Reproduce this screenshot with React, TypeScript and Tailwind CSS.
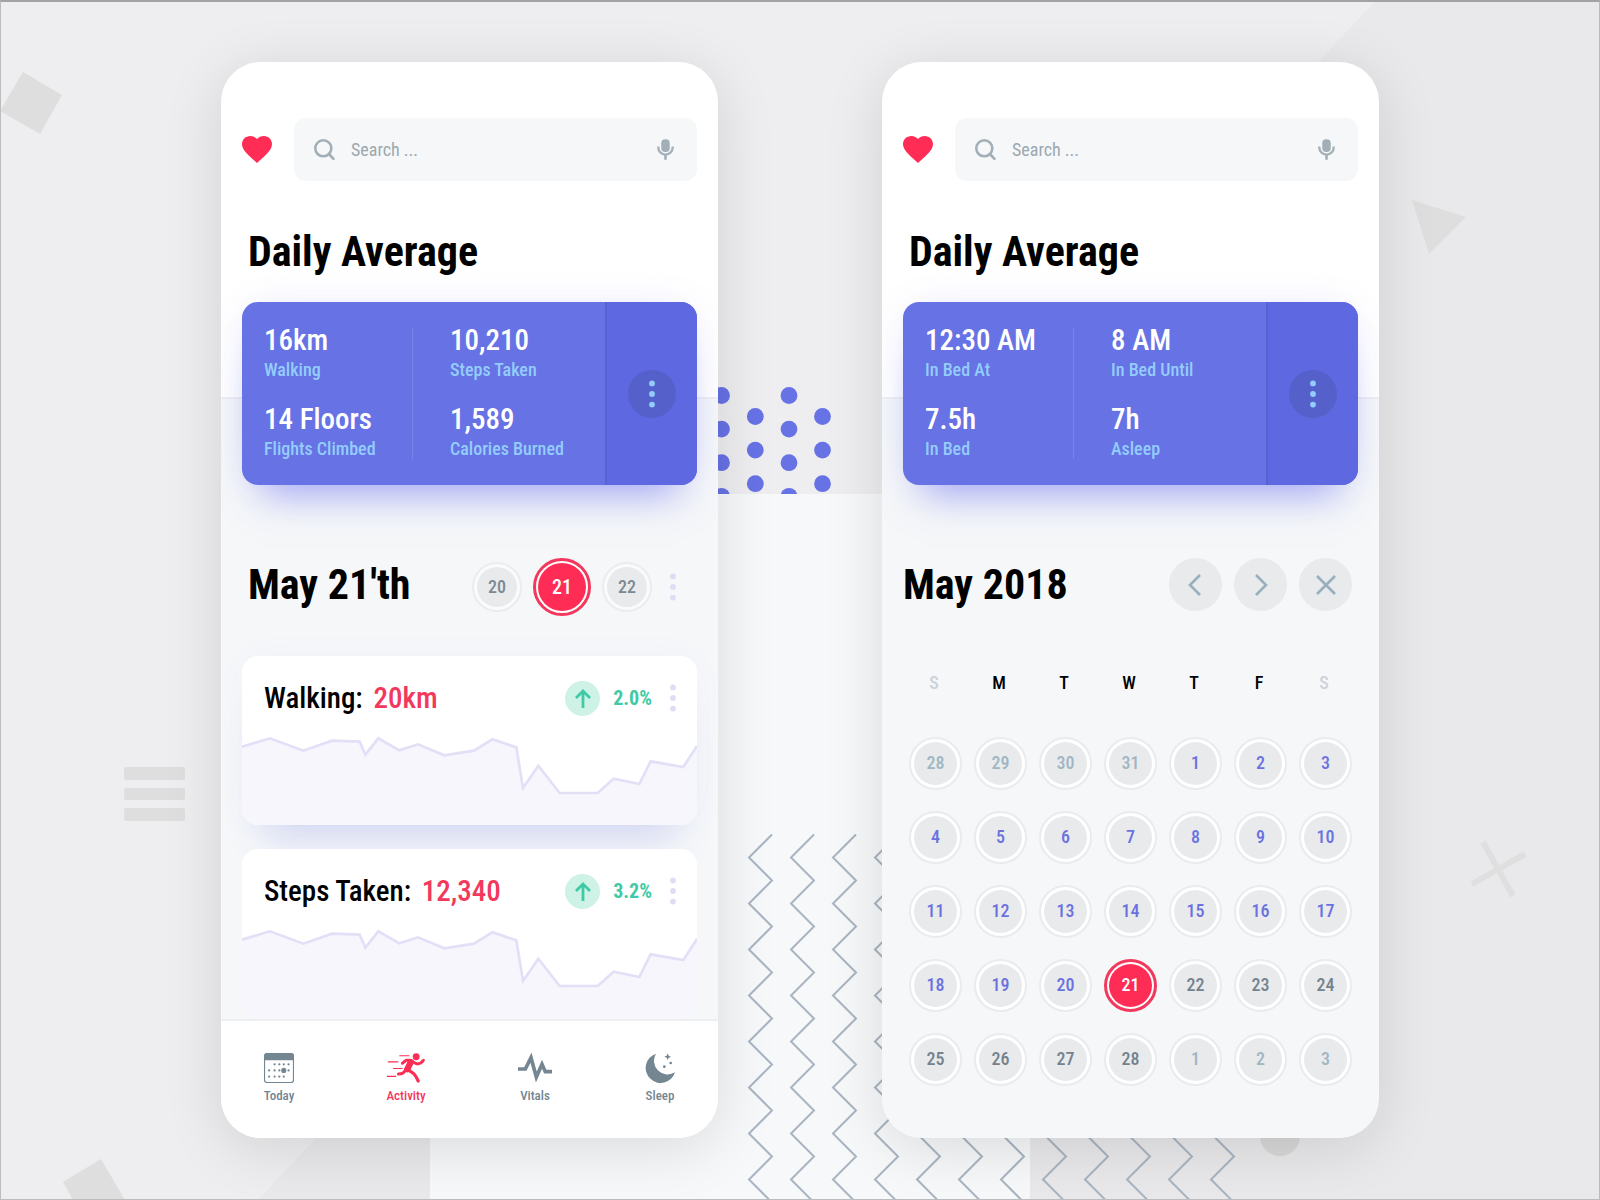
import type { ReactNode } from "react";

const chartPoints =
  "0,32 84,7 184,44 270,14 353,17 370,56 409,7 472,43 528,25 607,58 696,44 751,10 823,34 843,156 889,89 953,171 1067,171 1115,128 1192,144 1226,76 1324,93 1365,30";

const zigzagColumns = [772, 814, 856, 898, 940, 982, 1024, 1066, 1108, 1150, 1192, 1234];
const zigzagSegments = "l-23,23 l23,23 ".repeat(8);

const dotColumns = [
  { x: 721.5, y: 395.5 },
  { x: 755.3, y: 416.5 },
  { x: 789, y: 395.5 },
  { x: 822.5, y: 416.5 },
];

function Backdrop() {
  return (
    <svg
      aria-hidden="true"
      className="absolute inset-0 h-full w-full"
      viewBox="0 0 1600 1200"
      preserveAspectRatio="xMidYMid slice"
    >
      <defs>
        <clipPath id="dots-clip">
          <rect x="700" y="380" width="200" height="114" />
        </clipPath>
      </defs>
      <rect width="1600" height="1200" fill="#eeeef0" />
      <path d="M1376 0H1600V1200H258Z" fill="#e9e9eb" />
      <rect x="430" y="494" width="600" height="706" fill="#f6f8f9" />
      <g fill="#6772e5" clipPath="url(#dots-clip)">
        {dotColumns.map((c) =>
          [0, 1, 2, 3].map((r) => (
            <circle key={`${c.x}-${r}`} cx={c.x} cy={c.y + r * 33.6} r="8.4" />
          )),
        )}
      </g>
      <g fill="none" stroke="#a8b4c1" strokeWidth="2">
        {zigzagColumns.map((x) => (
          <path key={x} d={`M${x} 834.5 ${zigzagSegments}`} />
        ))}
      </g>
      <g fill="#dedede">
        <path d="M23 72L62 95L40 134L0 111Z" />
        <path d="M1412 200L1466 217L1429 254Z" />
        <path d="M63 1182L101 1159L125 1200H73Z" />
        <rect x="124" y="767" width="61" height="13" rx="2" />
        <rect x="124" y="788" width="61" height="12" rx="2" />
        <rect x="124" y="808" width="61" height="13" rx="2" />
        <circle cx="1280" cy="1136" r="20" fill="#d8d8d8" />
      </g>
      <path d="M1483 842L1513 896M1472 884L1525 854" stroke="#dfdfdf" strokeWidth="6" />
    </svg>
  );
}

function HeartIcon() {
  return (
    <svg aria-hidden="true" className="h-[27px] w-[30px] shrink-0 fill-[#ff2d55]" viewBox="2 3 20 18.35" preserveAspectRatio="none">
      <path d="M12 21.35l-1.45-1.32C5.4 15.36 2 12.28 2 8.5 2 5.42 4.42 3 7.5 3c1.74 0 3.41.81 4.5 2.09C13.09 3.81 14.76 3 16.5 3 19.58 3 22 5.42 22 8.5c0 3.78-3.4 6.86-8.55 11.54L12 21.35z" />
    </svg>
  );
}

function SearchBar() {
  return (
    <header className="flex items-center gap-[22px]">
      <HeartIcon />
      <div className="flex h-[63px] min-w-0 flex-1 items-center rounded-xl bg-[#f5f7f9] px-5">
        <svg aria-hidden="true" className="size-[22px] shrink-0" viewBox="0 0 22 22" fill="none" stroke="#a3afb6" strokeWidth="2.6">
          <circle cx="9.3" cy="9.3" r="8" />
          <path d="M15 15L19.5 19.8" strokeLinecap="round" />
        </svg>
        <input
          type="text"
          aria-label="Search"
          placeholder="Search ..."
          className="mx-[15px] min-w-0 flex-1 bg-transparent text-lg outline-none placeholder:text-[#9ca8af]"
        />
        <button type="button" aria-label="Voice search" className="flex w-[24px] shrink-0 justify-center">
          <svg aria-hidden="true" className="h-[21px] w-[17px]" viewBox="0 0 52 63" fill="none" stroke="#a3afb6">
            <rect x="13" y="0" width="26" height="39" rx="12" fill="#a3afb6" stroke="none" />
            <path d="M4 22v3a22 22 0 0 0 44 0v-3" strokeWidth="7" />
            <path d="M26 46V63" strokeWidth="8" />
          </svg>
        </button>
      </div>
    </header>
  );
}

function Dots({ className }: { className: string }) {
  return (
    <svg aria-hidden="true" className={className} viewBox="0 0 6 28">
      <circle cx="3" cy="3.4" r="2.9" />
      <circle cx="3" cy="14" r="2.9" />
      <circle cx="3" cy="24.6" r="2.9" />
    </svg>
  );
}

type Stat = { value: string; label: string };

function StatCell({ value, label }: Stat) {
  return (
    <div>
      <dd className="text-[29px] leading-8 font-medium text-white">{value}</dd>
      <dt className="text-lg leading-7 font-medium text-[#93cdfb]">{label}</dt>
    </div>
  );
}

function AverageCard({ left, right }: { left: Stat[]; right: Stat[] }) {
  return (
    <section className="flex h-[183px] rounded-2xl bg-[#6772e5] shadow-[0_30px_36px_-20px_rgba(100,105,240,0.5),0_0_40px_-12px_rgba(100,105,240,0.22)]">
      <div className="flex min-w-0 flex-1 py-[22px] pl-[22px]">
        <dl className="flex w-[148px] flex-col justify-between">
          {left.map((s) => (
            <StatCell key={s.label} {...s} />
          ))}
        </dl>
        <div className="my-1 w-px bg-[#7d8df0]/70" />
        <dl className="flex flex-1 flex-col justify-between pl-[37px]">
          {right.map((s) => (
            <StatCell key={s.label} {...s} />
          ))}
        </dl>
      </div>
      <div className="flex w-[92px] items-center justify-center rounded-r-2xl border-l-2 border-[#5862d2] bg-[#5e69e1]">
        <button type="button" aria-label="More" className="flex size-12 items-center justify-center rounded-full bg-[#5560ca]">
          <Dots className="h-7 w-[6px] fill-[#93cdfb]" />
        </button>
      </div>
    </section>
  );
}

function Phone({ children }: { children: ReactNode }) {
  return (
    <main className="flex w-full max-w-[497px] flex-col overflow-hidden rounded-[40px] bg-[linear-gradient(#fff_335px,#eeeff1_335px,#eeeff1_337px,#f5f7f9_337px)] pt-14 shadow-[0_10px_60px_rgba(0,0,0,0.12)]">
      {children}
    </main>
  );
}

function DayPill({ day, active = false }: { day: number; active?: boolean }) {
  return (
    <button
      type="button"
      aria-pressed={active}
      className={
        active
          ? "flex size-[58px] items-center justify-center rounded-full border-[3px] border-[#f2385c] bg-white p-[2px] text-xl text-white"
          : "flex size-[50px] items-center justify-center rounded-full border-2 border-[#eaecee] bg-[#fafbfc] p-[3px] text-lg text-[#7c8993]"
      }
    >
      <span
        className={
          active
            ? "flex size-full items-center justify-center rounded-full bg-[#ff2d55] font-medium"
            : "flex size-full items-center justify-center rounded-full bg-[#e8eaec] font-medium"
        }
      >
        {day}
      </span>
    </button>
  );
}

function MetricCard({ name, value, change }: { name: string; value: string; change: string }) {
  return (
    <article className="overflow-hidden rounded-2xl bg-white">
      <div className="flex h-20 items-center pt-1 pr-[21px] pl-[22px]">
        <h3 className="flex-1 text-[29px] leading-9 font-medium text-black">
          {name}: <span className="ml-1 text-[#f2385c]">{value}</span>
        </h3>
        <span className="flex size-[35px] items-center justify-center rounded-full bg-[#cff2e7]">
          <svg aria-hidden="true" className="h-[19px] w-4" viewBox="0 0 16 19" fill="none" stroke="#3fcaa5" strokeWidth="2.8">
            <path d="M8 19V2M1 9L8 2L15 9" />
          </svg>
        </span>
        <span className="ml-[13px] text-xl leading-6 font-bold text-[#3fcaa5]">{change}</span>
        <button type="button" aria-label={`${name} options`} className="ml-[18px]">
          <Dots className="h-7 w-[6px] fill-[#e0dcf6]" />
        </button>
      </div>
      <svg role="img" aria-label={`${name} chart`} className="block h-[89px] w-full" viewBox="0 0 1365 267" preserveAspectRatio="none">
        <polygon points={`${chartPoints} 1365,267 0,267`} fill="#f7f6fd" />
        <polyline points={chartPoints} fill="none" stroke="#e2dff7" strokeWidth="8" />
      </svg>
    </article>
  );
}

function TodayIcon() {
  const dots: [number, number][] = [
    [31, 33], [45, 33], [58, 33], [72, 33],
    [15, 51], [31, 51], [45, 51], [72, 51],
    [15, 69], [31, 69], [45, 69], [58, 69],
  ];
  return (
    <svg aria-hidden="true" className="size-[30px]" viewBox="0 0 88 88" fill="#738692">
      <rect x="1.5" y="1.5" width="85" height="85" rx="7" fill="none" stroke="#738692" strokeWidth="3.5" />
      <path d="M1 21V8a7 7 0 0 1 7-7H80a7 7 0 0 1 7 7V21Z" />
      {dots.map(([x, y]) => (
        <circle key={`${x}-${y}`} cx={x} cy={y} r="3.3" />
      ))}
      <circle cx="58" cy="51" r="7.5" />
    </svg>
  );
}

function ActivityIcon() {
  return (
    <svg aria-hidden="true" className="h-[30px] w-[38px]" viewBox="0 0 116 91" fill="none" stroke="#fb2f55" strokeLinecap="round" strokeLinejoin="round">
      <circle cx="89" cy="11" r="10.5" fill="#fb2f55" stroke="none" />
      <path d="M73 27L62 49" strokeWidth="19" />
      <path d="M68 22L58 22L47 31" strokeWidth="9" />
      <path d="M78 27L92 33Q104 33 111 22" strokeWidth="9" />
      <path d="M63 50L82 63Q90 72 95 85" strokeWidth="10" />
      <path d="M57 50Q52 64 35 64" strokeWidth="9.5" />
      <path d="M39 8H67M4 27H33M20 47H46M1 71H27" strokeWidth="3.6" />
    </svg>
  );
}

function VitalsIcon() {
  return (
    <svg aria-hidden="true" className="h-[34px] w-[34px]" viewBox="0 0 102 102" fill="none" stroke="#738692" strokeWidth="11" strokeMiterlimit="10">
      <path d="M0 54H22L39 20L55 78L72 40L82 62H102" />
    </svg>
  );
}

function SleepIcon() {
  return (
    <svg aria-hidden="true" className="size-[30px]" viewBox="0 0 90 90" fill="#738692">
      <path d="M33 2A45 45 0 1 0 90 58A41 41 0 0 1 33 2Z" />
      <path d="M68 1L71 8L78 11L71 14L68 21L65 14L58 11L65 8Z" />
      <circle cx="77" cy="30" r="4" />
      <circle cx="58" cy="41" r="4" />
    </svg>
  );
}

const tabs = [
  { label: "Today", icon: <TodayIcon />, width: "w-[30px]", active: false },
  { label: "Activity", icon: <ActivityIcon />, width: "w-[38px]", active: true },
  { label: "Vitals", icon: <VitalsIcon />, width: "w-[34px]", active: false },
  { label: "Sleep", icon: <SleepIcon />, width: "w-[30px]", active: false },
];

function ActivityPhone() {
  return (
    <Phone>
      <div className="px-[21px]">
        <SearchBar />
        <h1 className="mt-[47px] mb-[26px] pl-[6px] text-[42px] leading-[48px] font-bold text-black">Daily Average</h1>
        <AverageCard
          left={[
            { value: "16km", label: "Walking" },
            { value: "14 Floors", label: "Flights Climbed" },
          ]}
          right={[
            { value: "10,210", label: "Steps Taken" },
            { value: "1,589", label: "Calories Burned" },
          ]}
        />
        <div className="mt-[73px] flex h-[58px] items-center pr-[21px]">
          <h2 className="flex-1 pb-1 pl-[6px] text-[42px] leading-[48px] font-bold text-black">May 21'th</h2>
          <div className="flex items-center gap-[11px]">
            <DayPill day={20} />
            <DayPill day={21} active />
            <DayPill day={22} />
          </div>
          <button type="button" aria-label="More days" className="ml-[18px]">
            <Dots className="h-7 w-[6px] fill-[#e0dcf6]" />
          </button>
        </div>
        <div className="mt-10 flex flex-col gap-6">
          <div className="rounded-2xl shadow-[0_36px_36px_-22px_rgba(90,105,220,0.2),0_0_40px_-8px_rgba(90,105,220,0.05)]">
            <MetricCard name="Walking" value="20km" change="2.0%" />
          </div>
          <MetricCard name="Steps Taken" value="12,340" change="3.2%" />
        </div>
      </div>
      <nav aria-label="Main" className="mt-px flex h-[119px] items-start justify-between border-t-2 border-[#eeeff1] bg-white px-[43px] pt-[30px]">
        {tabs.map((t) => (
          <a
            key={t.label}
            href="#"
            aria-current={t.active ? "page" : undefined}
            className={`flex flex-col items-center text-[13px] leading-[22px] font-medium whitespace-nowrap ${t.width} ${t.active ? "text-[#f2385c]" : "text-[#738692]"}`}
          >
            <span className="flex h-[34px] items-center">{t.icon}</span>
            {t.label}
          </a>
        ))}
      </nav>
    </Phone>
  );
}

const tones = {
  muted: "text-[#9fb6c3]",
  past: "text-[#6b72df]",
  next: "text-[#74828c]",
};

type Tone = keyof typeof tones | "today";

const weeks: { day: number; tone: Tone }[][] = [
  [28, 29, 30, 31, 1, 2, 3].map((day) => ({ day, tone: day > 27 ? "muted" : "past" })),
  [4, 5, 6, 7, 8, 9, 10].map((day) => ({ day, tone: "past" })),
  [11, 12, 13, 14, 15, 16, 17].map((day) => ({ day, tone: "past" })),
  [18, 19, 20, 21, 22, 23, 24].map((day) => ({ day, tone: day === 21 ? "today" : day < 21 ? "past" : "next" })),
  [25, 26, 27, 28, 1, 2, 3].map((day) => ({ day, tone: day < 4 ? "muted" : "next" })),
];

function CalendarDay({ day, tone }: { day: number; tone: Tone }) {
  if (tone === "today") {
    return (
      <button type="button" aria-current="date" className="mx-auto flex size-[53px] rounded-full border-[3px] border-[#f2385c] bg-white p-[2px]">
        <span className="flex size-full items-center justify-center rounded-full bg-[#ff2d55] text-lg font-medium text-white">{day}</span>
      </button>
    );
  }
  return (
    <button type="button" className="mx-auto flex size-[53px] rounded-full border-2 border-[#e9ebec] bg-white p-[3px]">
      <span className={`flex size-full items-center justify-center rounded-full bg-[#e8eaec] text-lg font-medium ${tones[tone]}`}>{day}</span>
    </button>
  );
}

const controls = [
  { label: "Previous month", path: "M16 2L6 12L16 22" },
  { label: "Next month", path: "M7 2L17 12L7 22" },
  { label: "Close", path: "M3 3L21 21M21 3L3 21" },
];

function SleepPhone() {
  return (
    <Phone>
      <div className="px-[21px]">
        <SearchBar />
        <h1 className="mt-[47px] mb-[26px] pl-[6px] text-[42px] leading-[48px] font-bold text-black">Daily Average</h1>
        <AverageCard
          left={[
            { value: "12:30 AM", label: "In Bed At" },
            { value: "7.5h", label: "In Bed" },
          ]}
          right={[
            { value: "8 AM", label: "In Bed Until" },
            { value: "7h", label: "Asleep" },
          ]}
        />
        <div className="mt-[73px] flex h-[58px] items-center justify-between pr-[6px] pb-[5px]">
          <h2 className="text-[42px] leading-[48px] font-bold text-black">May 2018</h2>
          <div className="flex gap-3">
            {controls.map((c) => (
              <button key={c.label} type="button" aria-label={c.label} className="flex size-[53px] items-center justify-center rounded-full bg-[#e8eaec]">
                <svg aria-hidden="true" className="size-6" viewBox="0 0 24 24" fill="none" stroke="#98b0bd" strokeWidth="2.6">
                  <path d={c.path} />
                </svg>
              </button>
            ))}
          </div>
        </div>
        <table className="mt-[55px] w-full table-fixed">
          <thead>
            <tr>
              {["S", "M", "T", "W", "T", "F", "S"].map((d, i) => (
                <th key={i} scope="col" className={`h-6 pr-[3px] pb-[31px] text-lg leading-6 font-medium ${d === "S" ? "text-[#cdd2d8]" : "text-black"}`}>
                  {d}
                </th>
              ))}
            </tr>
          </thead>
          <tbody>
            {weeks.map((week, w) => (
              <tr key={w}>
                {week.map((d, i) => (
                  <td key={i} className="h-[74px] p-0">
                    <CalendarDay {...d} />
                  </td>
                ))}
              </tr>
            ))}
          </tbody>
        </table>
      </div>
    </Phone>
  );
}

export default function App() {
  return (
    <div className="relative min-h-screen overflow-hidden font-['Roboto_Condensed','Liberation_Sans_Narrow','Liberation_Sans',sans-serif]">
      <Backdrop />
      <div className="relative flex justify-center gap-[164px] px-6 py-[62px]">
        <ActivityPhone />
        <SleepPhone />
      </div>
      <div aria-hidden="true" className="pointer-events-none absolute inset-0 border border-t-2 border-[#bcbcbe] border-t-[#a2a2a4]" />
    </div>
  );
}
